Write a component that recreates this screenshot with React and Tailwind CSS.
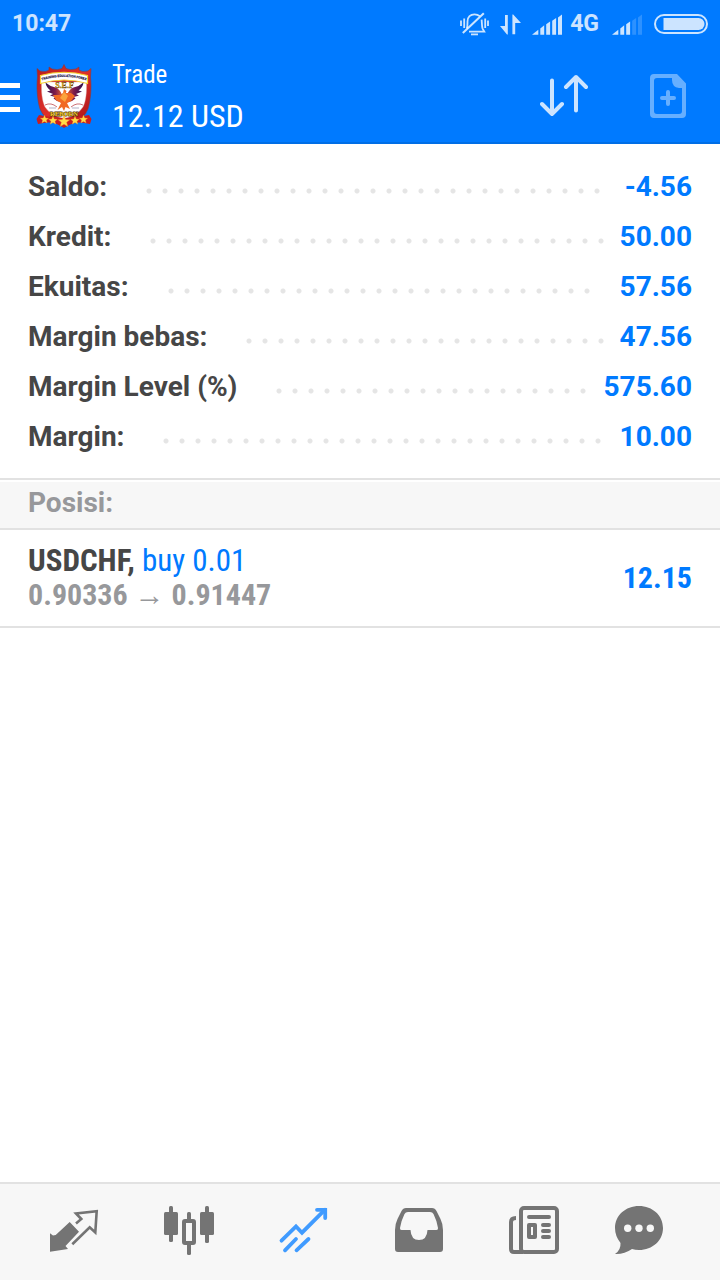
import React from 'react';

const summary = [
  { label: 'Saldo:', value: '-4.56' },
  { label: 'Kredit:', value: '50.00' },
  { label: 'Ekuitas:', value: '57.56' },
  { label: 'Margin bebas:', value: '47.56' },
  { label: 'Margin Level (%)', value: '575.60' },
  { label: 'Margin:', value: '10.00' },
];

const positions = [
  { symbol: 'USDCHF', side: 'buy', volume: '0.01', open: '0.90336', current: '0.91447', profit: '12.15' },
];

const tabs = [
  { name: 'Quotes', icon: QuotesIcon },
  { name: 'Charts', icon: ChartsIcon },
  { name: 'Trade', icon: TradeIcon },
  { name: 'History', icon: HistoryIcon },
  { name: 'News', icon: NewsIcon },
  { name: 'Messages', icon: MessagesIcon },
];

const STAR = 'M0 -4.4 L1.2 -1.4 L4.2 -1.3 L1.9 .6 L2.7 3.6 L0 1.9 L-2.7 3.6 L-1.9 .6 L-4.2 -1.3 L-1.2 -1.4 Z';

function SilentIcon() {
  return (
    <svg className="h-6 w-[29px]" viewBox="0 0 29 24" fill="none" stroke="currentColor" strokeWidth="1.8" aria-hidden="true">
      <path d="M1 8.5V14M4.2 6.5V16M25.2 6.5V16M28 8.5V14" />
      <path d="M6.8 16.5C7.6 15 7.5 13 7.5 9.5C7.5 5 10.5 2.3 14.5 2.3C16.5 2.3 18.4 3 19.7 4.2" />
      <path d="M21.6 7.6C22 10 21.7 14.5 22.6 16.6L24.3 19.6H9" />
      <path d="M2.8 21L23.8 1.2" strokeWidth="2" />
      <path d="M11 22.4H18" />
    </svg>
  );
}

function DataIcon() {
  return (
    <svg className="h-6 w-[21px]" viewBox="0 0 21 24" fill="currentColor" aria-hidden="true">
      <path d="M0 14H5V3H7.8V22.5H7Z" />
      <path d="M12.4 22.3H15.2V11H21L13.2 2.6H12.4Z" />
    </svg>
  );
}

function SignalIcon({ level }) {
  const bars = [
    'M0 22.7H6.3V17.7Z',
    'M8.3 22.7H12.2V13.2L8.3 16.4Z',
    'M14.2 22.7H18.1V9.6L14.2 12.2Z',
    'M20.2 22.7H24.1V6L20.2 8.8Z',
    'M26 22.7H30V2.4L26 5.4Z',
  ];
  return (
    <svg className="h-6 w-[30px]" viewBox="0 0 30 24" fill="currentColor" aria-hidden="true">
      {bars.map((d, i) => (
        <path key={d} d={d} opacity={i < level ? 1 : 0.22} />
      ))}
    </svg>
  );
}

function BatteryIcon() {
  return (
    <svg className="h-6 w-[54px]" viewBox="0 0 54 24" fill="none" aria-hidden="true">
      <rect x="1" y="3" width="52" height="18" rx="9" stroke="currentColor" strokeWidth="2" />
      <path d="M9.5 6H44.5A6 6 0 0 1 44.5 18H9.5Z" fill="currentColor" />
    </svg>
  );
}

function Crest() {
  return (
    <svg className="h-16 w-14" viewBox="0 0 56 64" aria-hidden="true">
      <defs>
        <linearGradient id="frame" x1="0" x2="1" y1="0" y2="1">
          <stop offset="0" stopColor="#b81c1c" />
          <stop offset=".5" stopColor="#e0302a" />
          <stop offset="1" stopColor="#a00f16" />
        </linearGradient>
        <linearGradient id="wingLeft" x1="0" x2="1">
          <stop offset="0" stopColor="#2c1150" />
          <stop offset=".55" stopColor="#7c1a4c" />
          <stop offset="1" stopColor="#f0652a" />
        </linearGradient>
        <linearGradient id="wingRight" x1="1" x2="0">
          <stop offset="0" stopColor="#2c1150" />
          <stop offset=".55" stopColor="#7c1a4c" />
          <stop offset="1" stopColor="#f0652a" />
        </linearGradient>
        <path id="arch" d="M6 16.4Q28 9.4 50 16.4" />
      </defs>
      <path
        d="M1 4.5L4 7Q10 8.5 13 6V3L16 5Q22 6.5 26 4.5L28 .5L30 4.5Q34 6.5 40 5L43 3V6Q46 8.5 52 7L55 4.5L54.5 13C55.5 22 55 35 52 45Q48 55 36 59L28 63.5L20 59Q8 55 4 45C1 35 .5 22 1.5 13Z"
        fill="url(#frame)"
        stroke="#8a3a3a"
        strokeWidth=".6"
      />
      <path d="M5.5 18H50.5C50.8 28 50 37 47 43Q42 51 28 55Q14 51 9 43C6 37 5.2 28 5.5 18Z" fill="#fff" stroke="#d9a4a0" strokeWidth=".4" />
      <path d="M4.5 11.5Q28 5 51.5 11.5V19.5Q28 12.5 4.5 19.5Z" fill="#fff" stroke="#f6cf2d" strokeWidth="1.2" />
      <text className="font-['Roboto',sans-serif] font-bold" fontSize="3.3" fill="#26164e" stroke="#26164e" strokeWidth=".15">
        <textPath href="#arch" startOffset="50%" textAnchor="middle">TRAINING EDUCATION FOREX</textPath>
      </text>
      <path d="M9.5 18.5Q14 22.5 19.5 23.5Q24 25 26 31L27 39L21 37L17.5 34.5L19 33L14 31.5L17 30L11 27.5L14.5 26.5Q10 23 9.5 18.5Z" fill="url(#wingLeft)" />
      <path d="M47.5 18.5Q43 22.5 37.5 23.5Q33 25 31 31L30 39L36 37L39.5 34.5L38 33L43 31.5L40 30L46 27.5L42.5 26.5Q47 23 47.5 18.5Z" fill="url(#wingRight)" />
      <path d="M28 25L30.5 27L29.8 29L35 29L39 32L35 37L31 39L34 45L29.5 43L28 47L26 43L21.5 46L25 39L20 36L17 31L24 31L27 29Z" fill="#f16a24" />
      <path d="M28 28L32 32L29 38L24 34Z" fill="#fba33b" />
      <text className="font-['Liberation_Serif',serif] font-bold" x="28.5" y="24" fontSize="8" textAnchor="middle" fill="#f4be19" stroke="#654209" strokeWidth=".35">S.E.F</text>
      <path d="M9 41Q15 38 21 43M47 41Q41 38 35 43" fill="none" stroke="#b4343a" strokeWidth=".7" />
      <path d="M13 44H20M36 44H43" stroke="#62618a" strokeWidth=".5" />
      <path d="M3 51Q28 57 53 51L55.5 55L54 60Q42 57 35 60L28 63.5L21 60Q14 57 2 60L.5 55Z" fill="#c91d20" />
      <text className="font-['Liberation_Serif',serif] font-bold" x="28" y="52" fontSize="6.5" textAnchor="middle" fill="#f7cf24" stroke="#4c3211" strokeWidth="1" paintOrder="stroke">REBORN</text>
      <g fill="#ffdc48" stroke="#f08325" strokeWidth=".3">
        <path d={STAR} transform="translate(8.5 55.5)" />
        <path d={STAR} transform="translate(17 56.5) scale(1.05)" />
        <path d={STAR} transform="translate(28 57.5) scale(1.4)" />
        <path d={STAR} transform="translate(39 56.5) scale(1.05)" />
        <path d={STAR} transform="translate(47.5 55.5)" />
      </g>
    </svg>
  );
}

function MenuIcon() {
  return (
    <svg className="h-8 w-5" viewBox="0 0 20 32" fill="currentColor" aria-hidden="true">
      <path d="M0 3H20V8H0ZM0 15H20V20H0ZM0 27H20V32H0Z" />
    </svg>
  );
}

function SortIcon() {
  return (
    <svg className="h-12 w-12" viewBox="0 0 48 48" fill="none" stroke="currentColor" strokeWidth="4" strokeLinecap="round" strokeLinejoin="round" aria-hidden="true">
      <path d="M12 8.5V42M2 32L12 42L22 32M36 38.5V5M26 15L36 5L46 15" />
    </svg>
  );
}

function NewOrderIcon() {
  return (
    <svg className="h-12 w-9" viewBox="0 0 36 48" fill="none" aria-hidden="true">
      <path
        fill="currentColor"
        fillRule="evenodd"
        d="M4 2H27L36 11.5V42Q36 46 32 46H4Q0 46 0 42V6Q0 2 4 2ZM7 6Q4 6 4 9V39Q4 42 7 42H29Q32 42 32 39V16H29Q22 15 22 8V6Z"
      />
      <path d="M18 20V32M12 26H24" stroke="currentColor" strokeWidth="4" strokeLinecap="round" />
    </svg>
  );
}

function TabSvg({ children }) {
  return (
    <svg className="h-14 w-[71px]" viewBox="0 0 71 56" fill="none" aria-hidden="true">
      {children}
    </svg>
  );
}

function QuotesIcon() {
  return (
    <TabSvg>
      <path d="M12 29.3L15 31.5L17.7 31L31.7 18L41 27.7L27.5 42L30 45L12 47.8Z" fill="currentColor" />
      <path d="M38 19.5L43.3 15L38 9.5L58.7 7.2L57.3 28.5L51.7 23.3L34.3 40.3" stroke="currentColor" strokeWidth="2.6" />
    </TabSvg>
  );
}

function ChartsIcon() {
  return (
    <TabSvg>
      <g fill="currentColor">
        <rect x="11" y="8" width="14" height="23" rx="1.5" />
        <rect x="16" y="2" width="4" height="36" rx="1.5" />
        <rect x="47" y="8" width="14" height="23" rx="1.5" />
        <rect x="52" y="2" width="4" height="37" rx="1.5" />
        <rect x="34" y="8" width="4" height="9" rx="1.5" />
        <rect x="34" y="39" width="4" height="12" rx="1.5" />
      </g>
      <rect x="31" y="17" width="10" height="22" rx="1" stroke="currentColor" strokeWidth="4" />
    </TabSvg>
  );
}

function TradeIcon() {
  return (
    <TabSvg>
      <g stroke="currentColor" strokeWidth="3.8" strokeLinecap="round">
        <path d="M13.5 36.7L28 22.5L34 28.7L57 5.7" strokeLinejoin="miter" />
        <path d="M49 5.8H57.2V14" />
        <path d="M28 35L17 46.3M40.5 35L28.5 46.3" />
      </g>
    </TabSvg>
  );
}

function HistoryIcon() {
  return (
    <TabSvg>
      <path
        fill="currentColor"
        fillRule="evenodd"
        d="M23 4H49Q52 4 53.5 7L57.5 15Q60 20 60 26V45Q60 48 57 48H15Q12 48 12 45V26Q12 20 14.5 15L18.5 7Q20 4 23 4ZM25 8Q22.5 8 21.5 10Q18 17 17 24Q16.7 26 18.5 26H27.5Q28 36 36 36Q44 36 44.5 26H53.5Q55.3 26 55 24Q54 17 50.5 10Q49.5 8 47 8Z"
      />
    </TabSvg>
  );
}

function NewsIcon() {
  return (
    <TabSvg>
      <rect x="23" y="4" width="36" height="44" rx="3" stroke="currentColor" strokeWidth="4" />
      <path d="M18 14Q13 14 13 18V45Q13 48 16 48H25" stroke="currentColor" strokeWidth="4" />
      <path d="M31 13H51M45 21H51M45 27H51M45 33H51" stroke="currentColor" strokeWidth="4" strokeLinecap="round" />
      <rect x="31" y="21" width="6" height="12" stroke="currentColor" strokeWidth="4" strokeLinejoin="round" />
    </TabSvg>
  );
}

function MessagesIcon() {
  return (
    <TabSvg>
      <path
        fill="currentColor"
        d="M26 2C39.5 2 50 11.5 50 24S39.5 46 26 46Q22 46 19 45Q11 50.5 2 50Q8 46 7.5 39Q2 32 2 24C2 11.5 12.5 2 26 2Z"
      />
      <g className="fill-[#f7f7f7]">
        <circle cx="14.7" cy="24.3" r="3.7" />
        <circle cx="26" cy="24.3" r="3.7" />
        <circle cx="37.3" cy="24.3" r="3.7" />
      </g>
    </TabSvg>
  );
}

function StatusBar() {
  return (
    <div className="flex h-12 items-center justify-between px-3 text-[23px] font-bold text-white/80">
      <span>10:47</span>
      <div className="flex items-center">
        <SilentIcon />
        <span className="ml-[11px]"><DataIcon /></span>
        <span className="ml-[11px]"><SignalIcon level={5} /></span>
        <span className="ml-2">4G</span>
        <span className="ml-[13px]"><SignalIcon level={3} /></span>
        <span className="ml-3"><BatteryIcon /></span>
      </div>
    </div>
  );
}

function SummaryRow({ label, value }) {
  return (
    <div className="flex h-[50px] items-center text-[28px] leading-8 font-bold">
      <dt className="text-[#464646]">{label}</dt>
      <div className="ml-[34px] mr-2.5 min-w-0 flex-1 pt-2">
        {/* dotted leader, whole 16px steps only */}
        <div className="h-[6px] w-[round(down,100%,16px)] bg-[radial-gradient(circle,#e5e5e5_2px,transparent_3px)] bg-[length:16px_6px]" />
      </div>
      <dd className="text-[#007aff]">{value}</dd>
    </div>
  );
}

export default function App() {
  return (
    <div className="flex min-h-screen flex-col bg-white font-['Roboto',sans-serif]">
      <header className="bg-[#007aff] shadow-[inset_0_-2px_0_#006ee6]">
        <StatusBar />
        <div className="flex h-24 items-center pr-[34px] text-white">
          <button type="button" aria-label="Menu"><MenuIcon /></button>
          <div className="ml-4"><Crest /></div>
          <div className="ml-5 flex-1 pb-[3px] font-['Roboto_Condensed','Liberation_Sans_Narrow',sans-serif]">
            <h1 className="text-[25px] leading-[42px]">Trade</h1>
            <p className="text-[32px] leading-10">12.12 USD</p>
          </div>
          <button type="button" aria-label="Sort" className="text-white/80"><SortIcon /></button>
          <button type="button" aria-label="New order" className="ml-[62px] text-white/40"><NewOrderIcon /></button>
        </div>
      </header>

      <main className="flex-1">
        <dl className="px-7 pt-[18px] pb-4">
          {summary.map((row) => (
            <SummaryRow key={row.label} label={row.label} value={row.value} />
          ))}
        </dl>

        <h2 className="border-y-2 border-[#e2e2e2] bg-[#f7f7f7] px-7 pt-[7px] pb-[9px] text-[28px] leading-8 font-bold text-[#97989b] shadow-[inset_0_2px_0_#fff]">
          Posisi:
        </h2>

        <ul className="font-['Roboto_Condensed','Liberation_Sans_Narrow',sans-serif] text-[30px] leading-[34px]">
          {positions.map((p) => (
            <li key={p.symbol} className="flex items-center justify-between border-b-2 border-[#e2e2e2] px-7 py-3.5">
              <div>
                <p className="text-[31px]">
                  <span className="font-bold text-[#464646]">{p.symbol},</span>{' '}
                  <span className="text-[#007aff]">{p.side} {p.volume}</span>
                </p>
                <p className="font-bold text-[#97989b]">{p.open} → {p.current}</p>
              </div>
              <span className="font-bold text-[#007aff]">{p.profit}</span>
            </li>
          ))}
        </ul>
      </main>

      <nav className="flex border-t-2 border-[#e2e2e2] bg-[#f7f7f7] py-5 pl-4 pr-3.5">
        {tabs.map((tab) => (
          <button
            key={tab.name}
            type="button"
            aria-label={tab.name}
            className={tab.name === 'Trade' ? 'flex flex-1 justify-center text-[#409bff]' : 'flex flex-1 justify-center text-[#747474]'}
          >
            <tab.icon />
          </button>
        ))}
      </nav>
    </div>
  );
}
